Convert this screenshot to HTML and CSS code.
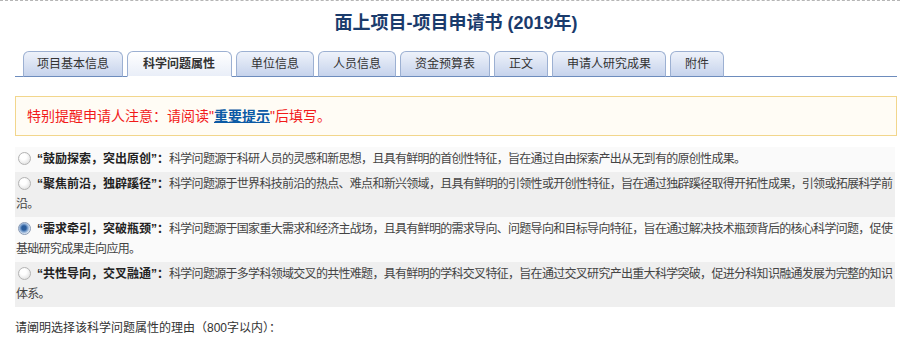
FILE: index.html
```html
<html lang="zh-CN">
<head>
  <meta charset="UTF-8">
  <meta name="viewport" content="width=device-width, initial-scale=1.0">
  <title>面上项目-项目申请书</title>
  <link rel="stylesheet" href="styles.css">
</head>
<body>
  <div class="top-line"></div>
  <div class="page">
    <h1 class="title">面上项目-项目申请书 (2019年)</h1>

    <ul class="tabs">
      <li class="tab">项目基本信息</li>
      <li class="tab active">科学问题属性</li>
      <li class="tab">单位信息</li>
      <li class="tab">人员信息</li>
      <li class="tab">资金预算表</li>
      <li class="tab">正文</li>
      <li class="tab">申请人研究成果</li>
      <li class="tab">附件</li>
    </ul>

    <div class="notice">
      特别提醒申请人注意：请阅读"<a href="#">重要提示</a>"后填写。
    </div>

    <div class="options">
      <div class="option odd">
        <span class="radio"></span><b>“鼓励探索，突出原创”：</b>科学问题源于科研人员的灵感和新思想，且具有鲜明的首创性特征，旨在通过自由探索产出从无到有的原创性成果。
      </div>
      <div class="option even">
        <span class="radio"></span><b>“聚焦前沿，独辟蹊径”：</b>科学问题源于世界科技前沿的热点、难点和新兴领域，且具有鲜明的引领性或开创性特征，旨在通过独辟蹊径取得开拓性成果，引领或拓展科学前沿。
      </div>
      <div class="option odd">
        <span class="radio checked"></span><b>“需求牵引，突破瓶颈”：</b>科学问题源于国家重大需求和经济主战场，且具有鲜明的需求导向、问题导向和目标导向特征，旨在通过解决技术瓶颈背后的核心科学问题，促使基础研究成果走向应用。
      </div>
      <div class="option even">
        <span class="radio"></span><b>“共性导向，交叉融通”：</b>科学问题源于多学科领域交叉的共性难题，具有鲜明的学科交叉特征，旨在通过交叉研究产出重大科学突破，促进分科知识融通发展为完整的知识体系。
      </div>
    </div>

    <p class="reason">请阐明选择该科学问题属性的理由（800字以内）：</p>
  </div>
</body>
</html>
```

FILE: styles.css
```css
body {
  margin: 0;
  font-family: "Liberation Sans", Arial, "Noto Sans CJK SC", sans-serif;
  font-size: 12px;
  color: #333;
  background: #fff;
}

.top-line {
  border-top: 1px dashed #b5b5b5;
}

.page {
  margin: 0 3px 0 15px;
}

.title {
  margin: 0;
  height: 50px;
  line-height: 44px;
  text-align: center;
  font-size: 18px;
  font-weight: bold;
  color: #1a3b6c;
}

.tabs {
  display: flex;
  gap: 4px;
  list-style: none;
  margin: 0;
  padding: 0 0 0 8px;
  border-bottom: 1px solid #6d8cbd;
}

.tab {
  height: 24px;
  line-height: 25px;
  padding: 0 14px;
  margin-bottom: -1px;
  font-size: 12px;
  color: #333;
  border: 1px solid #9cb0d2;
  border-bottom-color: #6d8cbd;
  border-radius: 6px 6px 0 0;
  background: linear-gradient(#eef2fa, #c6d3ec);
}

.tab:first-child {
  padding: 0 13px;
}

.tab.active {
  font-weight: bold;
  padding: 0 16px 0 15px;
  border-bottom-color: #fff;
  background: linear-gradient(#ffffff, #e9eef8);
}

.notice {
  margin-top: 19px;
  height: 38px;
  line-height: 38px;
  padding-left: 11px;
  font-size: 14px;
  color: #f21a1a;
  background: #fffcf5;
  border: 1px solid #f2d68c;
}

.notice a {
  color: #0b5aa5;
  font-weight: bold;
  text-decoration: underline;
}

.options {
  margin-top: 11px;
  margin-right: 2px;
}

.option {
  padding: 2px 0 3px 1px;
  line-height: 20px;
  color: #444;
  letter-spacing: -0.7px;
}

.option.odd {
  background: #fafafa;
}

.option.even {
  background: #efefef;
}

.option b {
  color: #222;
  letter-spacing: 0;
}

.radio {
  display: inline-block;
  width: 13px;
  height: 13px;
  margin: 0 6px 0 2px;
  vertical-align: -2px;
  border: 1px solid #b3b3b3;
  border-radius: 50%;
  background: radial-gradient(circle at 40% 35%, #ffffff 30%, #d6d6d6);
  box-sizing: border-box;
}

.radio.checked {
  border-color: #8a9bb5;
  background: radial-gradient(circle at 45% 45%, #2a5d9c 25%, #7ea2cf 45%, #e3ebf5 70%);
}

.reason {
  margin: 11px 0 0;
  line-height: 20px;
  color: #333;
}
```
